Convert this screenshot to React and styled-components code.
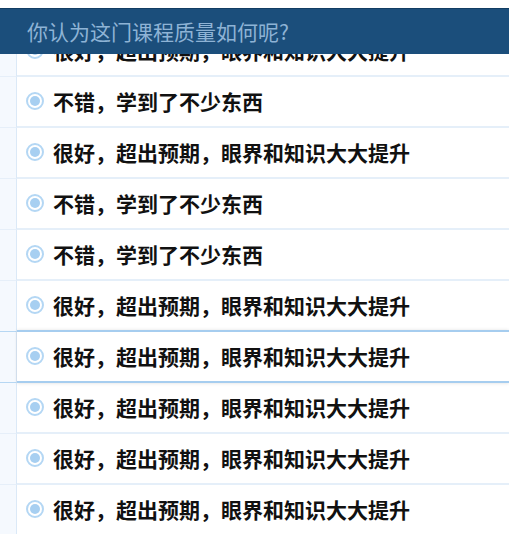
import React from "react";
import styled, { createGlobalStyle } from "styled-components";

const Global = createGlobalStyle`
    html, body {
        margin: 0;
        padding: 0;
        background: #fff;
        font-family: "Noto Sans CJK SC", "Noto Sans", sans-serif;
    }
`;

const options = [
    { text: "很好，超出预期，眼界和知识大大提升" },
    { text: "不错，学到了不少东西" },
    { text: "很好，超出预期，眼界和知识大大提升" },
    { text: "不错，学到了不少东西" },
    { text: "不错，学到了不少东西" },
    { text: "很好，超出预期，眼界和知识大大提升" },
    { text: "很好，超出预期，眼界和知识大大提升", active: true },
    { text: "很好，超出预期，眼界和知识大大提升" },
    { text: "很好，超出预期，眼界和知识大大提升" },
    { text: "很好，超出预期，眼界和知识大大提升" },
];

export default function App() {
    return (
        <Page>
            <Global />
            <Header>你认为这门课程质量如何呢?</Header>
            <List>
                {options.map((o, i) => (
                    <Row key={i}>
                        <Gutter $active={o.active} />
                        <Cell $active={o.active}>
                            <Radio />
                            <Label>{o.text}</Label>
                        </Cell>
                    </Row>
                ))}
            </List>
        </Page>
    );
}

const Page = styled.div`
    position: relative;
    padding-top: 26px;
    height: 534px;
    overflow: hidden;
`;

const Header = styled.div`
    position: absolute;
    top: 8px;
    left: 0;
    right: 0;
    z-index: 5;
    height: 46px;
    display: flex;
    align-items: center;
    padding-left: 27px;
    padding-bottom: 1px;
    box-sizing: border-box;
    background: #1b4e7b;
    border-top: 1px solid #123d63;
    color: #8eb3d5;
    font-size: 21px;
    font-weight: 400;
`;

const List = styled.div`
    display: flex;
    flex-direction: column;
`;

const Row = styled.div`
    display: grid;
    grid-template-columns: 17px 1fr;
`;

const Gutter = styled.div`
    background: #f5f9fe;
    border-right: 1px solid #dbe9f7;
    border-bottom: 1px solid ${p => (p.$active ? "#b6d7f3" : "#e6eff9")};
    margin-top: ${p => (p.$active ? "-1px" : "0")};
    border-top: ${p => (p.$active ? "1px solid #b6d7f3" : "none")};
`;

const Cell = styled.div`
    height: 47px;
    padding-bottom: 2px;
    display: flex;
    align-items: center;
    padding-left: 9px;
    background: #fff;
    border-bottom: 2px solid ${p => (p.$active ? "#a6cdef" : "#e5eff9")};
    ${p => p.$active && `
        margin-top: -2px;
        border-top: 2px solid #a6cdef;
        position: relative;
        z-index: 1;
        box-shadow: 0 1px 3px rgba(0,0,0,0.08), 0 -1px 3px rgba(0,0,0,0.05);
    `}
`;

const Radio = styled.span`
    flex: none;
    position: relative;
    width: 18px;
    height: 18px;
    box-sizing: border-box;
    border: 2px solid #b4d7f4;
    border-radius: 50%;
    background: #fff;
    &::after {
        content: "";
        position: absolute;
        left: 50%;
        top: 50%;
        width: 10px;
        height: 10px;
        border-radius: 50%;
        background: #a7cff1;
        transform: translate(-50%, -50%);
    }
`;

const Label = styled.span`
    margin-left: 9px;
    font-size: 21px;
    font-weight: 700;
    color: #111;
    white-space: nowrap;
`;
